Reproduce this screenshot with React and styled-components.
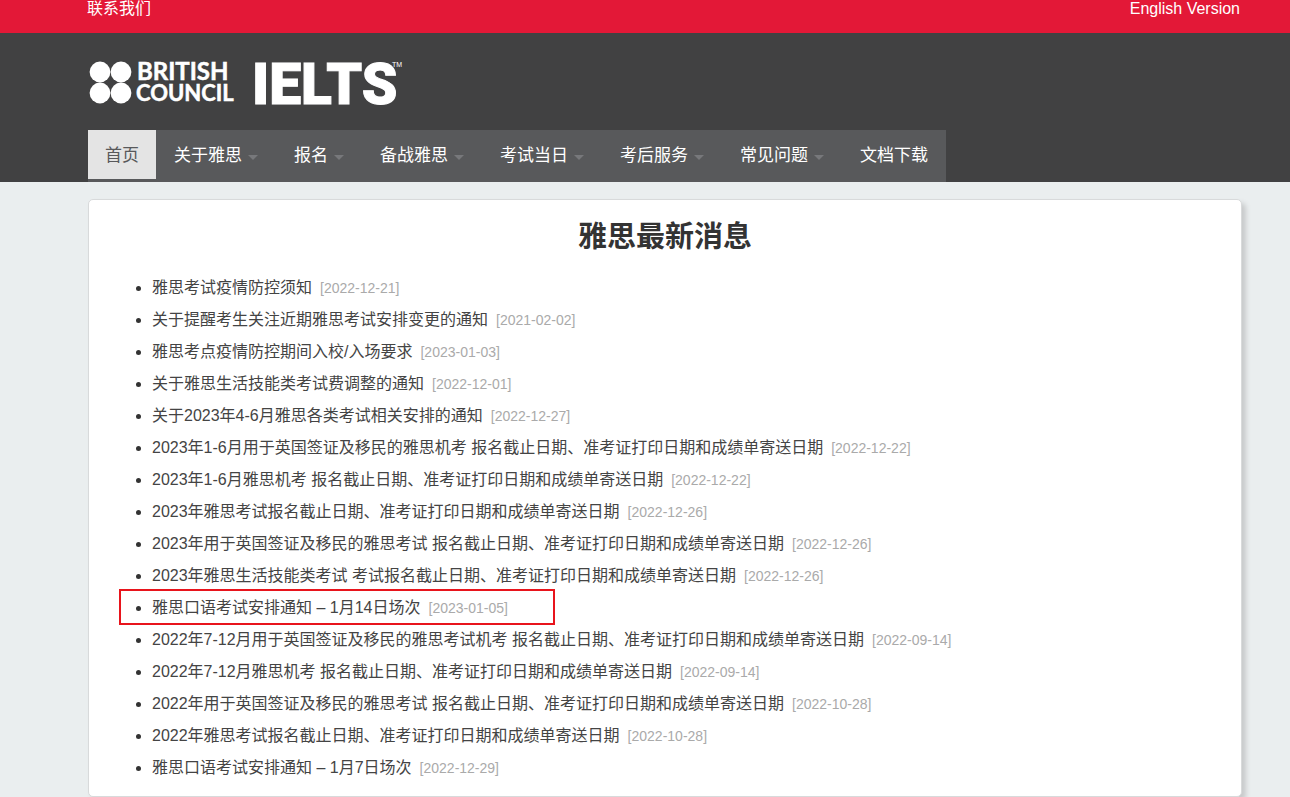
import React from "react";
import styled, { createGlobalStyle } from "styled-components";

const GlobalStyle = createGlobalStyle`
    * {
        box-sizing: border-box;
    }
    body {
        margin: 0;
        background-color: #eaeeef;
        color: #333;
        font-family: "Liberation Sans", Arial, "Noto Sans CJK SC", sans-serif;
        font-size: 16px;
    }
    a {
        color: inherit;
        text-decoration: none;
    }
`;

const TopBar = styled.div`
    display: flex;
    justify-content: space-between;
    padding: 0 50px 15px 87px;
    background-color: #e31837;
    color: white;
    line-height: 18px;
`;

const Header = styled.header`
    padding: 24px 48px 0 88px;
    background-color: #414142;
`;

const LogoLink = styled.a`
    display: block;
    height: 73px;
`;

const Nav = styled.nav`
    display: flex;
`;

const NavList = styled.ul`
    display: flex;
    margin: 0;
    padding: 0 0 3px;
    list-style: none;
    background-color: #58595b;
`;

const NavLink = styled.a`
    display: flex;
    align-items: center;
    gap: 6px;
    height: 49px;
    padding: 0 ${props => (props.$active ? "17px" : "18px")} 3px;
    background-color: ${props => (props.$active ? "#e4e4e4" : "transparent")};
    && {
        color: ${props => (props.$active ? "#58595b" : "white")};
    }
    font-size: 17px;
    white-space: nowrap;
`;

const Caret = styled.span`
    margin-top: 8px;
    border: 5px solid transparent;
    border-top-color: #77787b;
    border-bottom: 0;
`;

const Card = styled.main`
    margin: 17px 48px 0 88px;
    padding: 16px 0 12px;
    border: 1px solid #d8dadb;
    border-radius: 5px;
    background-color: white;
    box-shadow: 4px 4px 5px #c8cacb;
`;

const Title = styled.h1`
    margin: 0 0 14px;
    font-size: 29px;
    line-height: 42px;
    text-align: center;
`;

const NewsList = styled.ul`
    margin: 0;
    padding: 0 24px 0 63px;
`;

const NewsItem = styled.li`
    position: relative;
    line-height: 32px;
`;

const NewsLink = styled.a`
    && {
        color: #444;
    }
`;

const NewsDate = styled.span`
    margin-left: 8px;
    color: #aaa;
    font-size: 14px;
`;

const Marker = styled.span`
    position: absolute;
    top: -3px;
    left: -33px;
    width: 436px;
    height: 36px;
    border: 2px solid #e8141c;
    pointer-events: none;
`;

const menu = [
    { label: "首页", active: true },
    { label: "关于雅思", sub: true },
    { label: "报名", sub: true },
    { label: "备战雅思", sub: true },
    { label: "考试当日", sub: true },
    { label: "考后服务", sub: true },
    { label: "常见问题", sub: true },
    { label: "文档下载" },
];

const news = [
    { title: "雅思考试疫情防控须知", date: "2022-12-21" },
    { title: "关于提醒考生关注近期雅思考试安排变更的通知", date: "2021-02-02" },
    { title: "雅思考点疫情防控期间入校/入场要求", date: "2023-01-03" },
    { title: "关于雅思生活技能类考试费调整的通知", date: "2022-12-01" },
    { title: "关于2023年4-6月雅思各类考试相关安排的通知", date: "2022-12-27" },
    { title: "2023年1-6月用于英国签证及移民的雅思机考 报名截止日期、准考证打印日期和成绩单寄送日期", date: "2022-12-22" },
    { title: "2023年1-6月雅思机考 报名截止日期、准考证打印日期和成绩单寄送日期", date: "2022-12-22" },
    { title: "2023年雅思考试报名截止日期、准考证打印日期和成绩单寄送日期", date: "2022-12-26" },
    { title: "2023年用于英国签证及移民的雅思考试 报名截止日期、准考证打印日期和成绩单寄送日期", date: "2022-12-26" },
    { title: "2023年雅思生活技能类考试 考试报名截止日期、准考证打印日期和成绩单寄送日期", date: "2022-12-26" },
    { title: "雅思口语考试安排通知 – 1月14日场次", date: "2023-01-05", marked: true },
    { title: "2022年7-12月用于英国签证及移民的雅思考试机考 报名截止日期、准考证打印日期和成绩单寄送日期", date: "2022-09-14" },
    { title: "2022年7-12月雅思机考 报名截止日期、准考证打印日期和成绩单寄送日期", date: "2022-09-14" },
    { title: "2022年用于英国签证及移民的雅思考试 报名截止日期、准考证打印日期和成绩单寄送日期", date: "2022-10-28" },
    { title: "2022年雅思考试报名截止日期、准考证打印日期和成绩单寄送日期", date: "2022-10-28" },
    { title: "雅思口语考试安排通知 – 1月7日场次", date: "2022-12-29" },
];

function Logo(){
    return(
        <svg width="330" height="73" fill="white" role="img" aria-label="British Council IELTS">
            <circle cx="12" cy="15" r="10.4" />
            <circle cx="33" cy="15" r="10.4" />
            <circle cx="12" cy="36" r="10.4" />
            <circle cx="33" cy="36" r="10.4" />
            <g fontFamily="Lato, sans-serif" fontWeight="700" stroke="white" strokeWidth="0.5">
                <text x="49" y="23" fontSize="24">BRITISH</text>
                <text x="48" y="44" fontSize="22">COUNCIL</text>
            </g>
            <text x="164" y="47" fontFamily="Roboto, sans-serif" fontWeight="900" fontSize="57" stroke="white" strokeWidth="1">IELTS</text>
            <text x="304" y="10" fontFamily="Liberation Sans, sans-serif" fontSize="7">TM</text>
        </svg>
    );
}

export default function App(){
    return(
        <>
            <GlobalStyle />
            <TopBar>
                <a href="#contact">联系我们</a>
                <a href="#english">English Version</a>
            </TopBar>
            <Header>
                <LogoLink href="#home">
                    <Logo />
                </LogoLink>
                <Nav>
                    <NavList>
                        {menu.map(item => (
                            <li key={item.label}>
                                <NavLink href="#menu" $active={item.active}>
                                    {item.label}
                                    {item.sub && <Caret />}
                                </NavLink>
                            </li>
                        ))}
                    </NavList>
                </Nav>
            </Header>
            <Card>
                <Title>雅思最新消息</Title>
                <NewsList>
                    {news.map(item => (
                        <NewsItem key={item.title}>
                            <NewsLink href="#news">{item.title}</NewsLink>
                            <NewsDate>[{item.date}]</NewsDate>
                            {item.marked && <Marker />}
                        </NewsItem>
                    ))}
                </NewsList>
            </Card>
        </>
    );
}
